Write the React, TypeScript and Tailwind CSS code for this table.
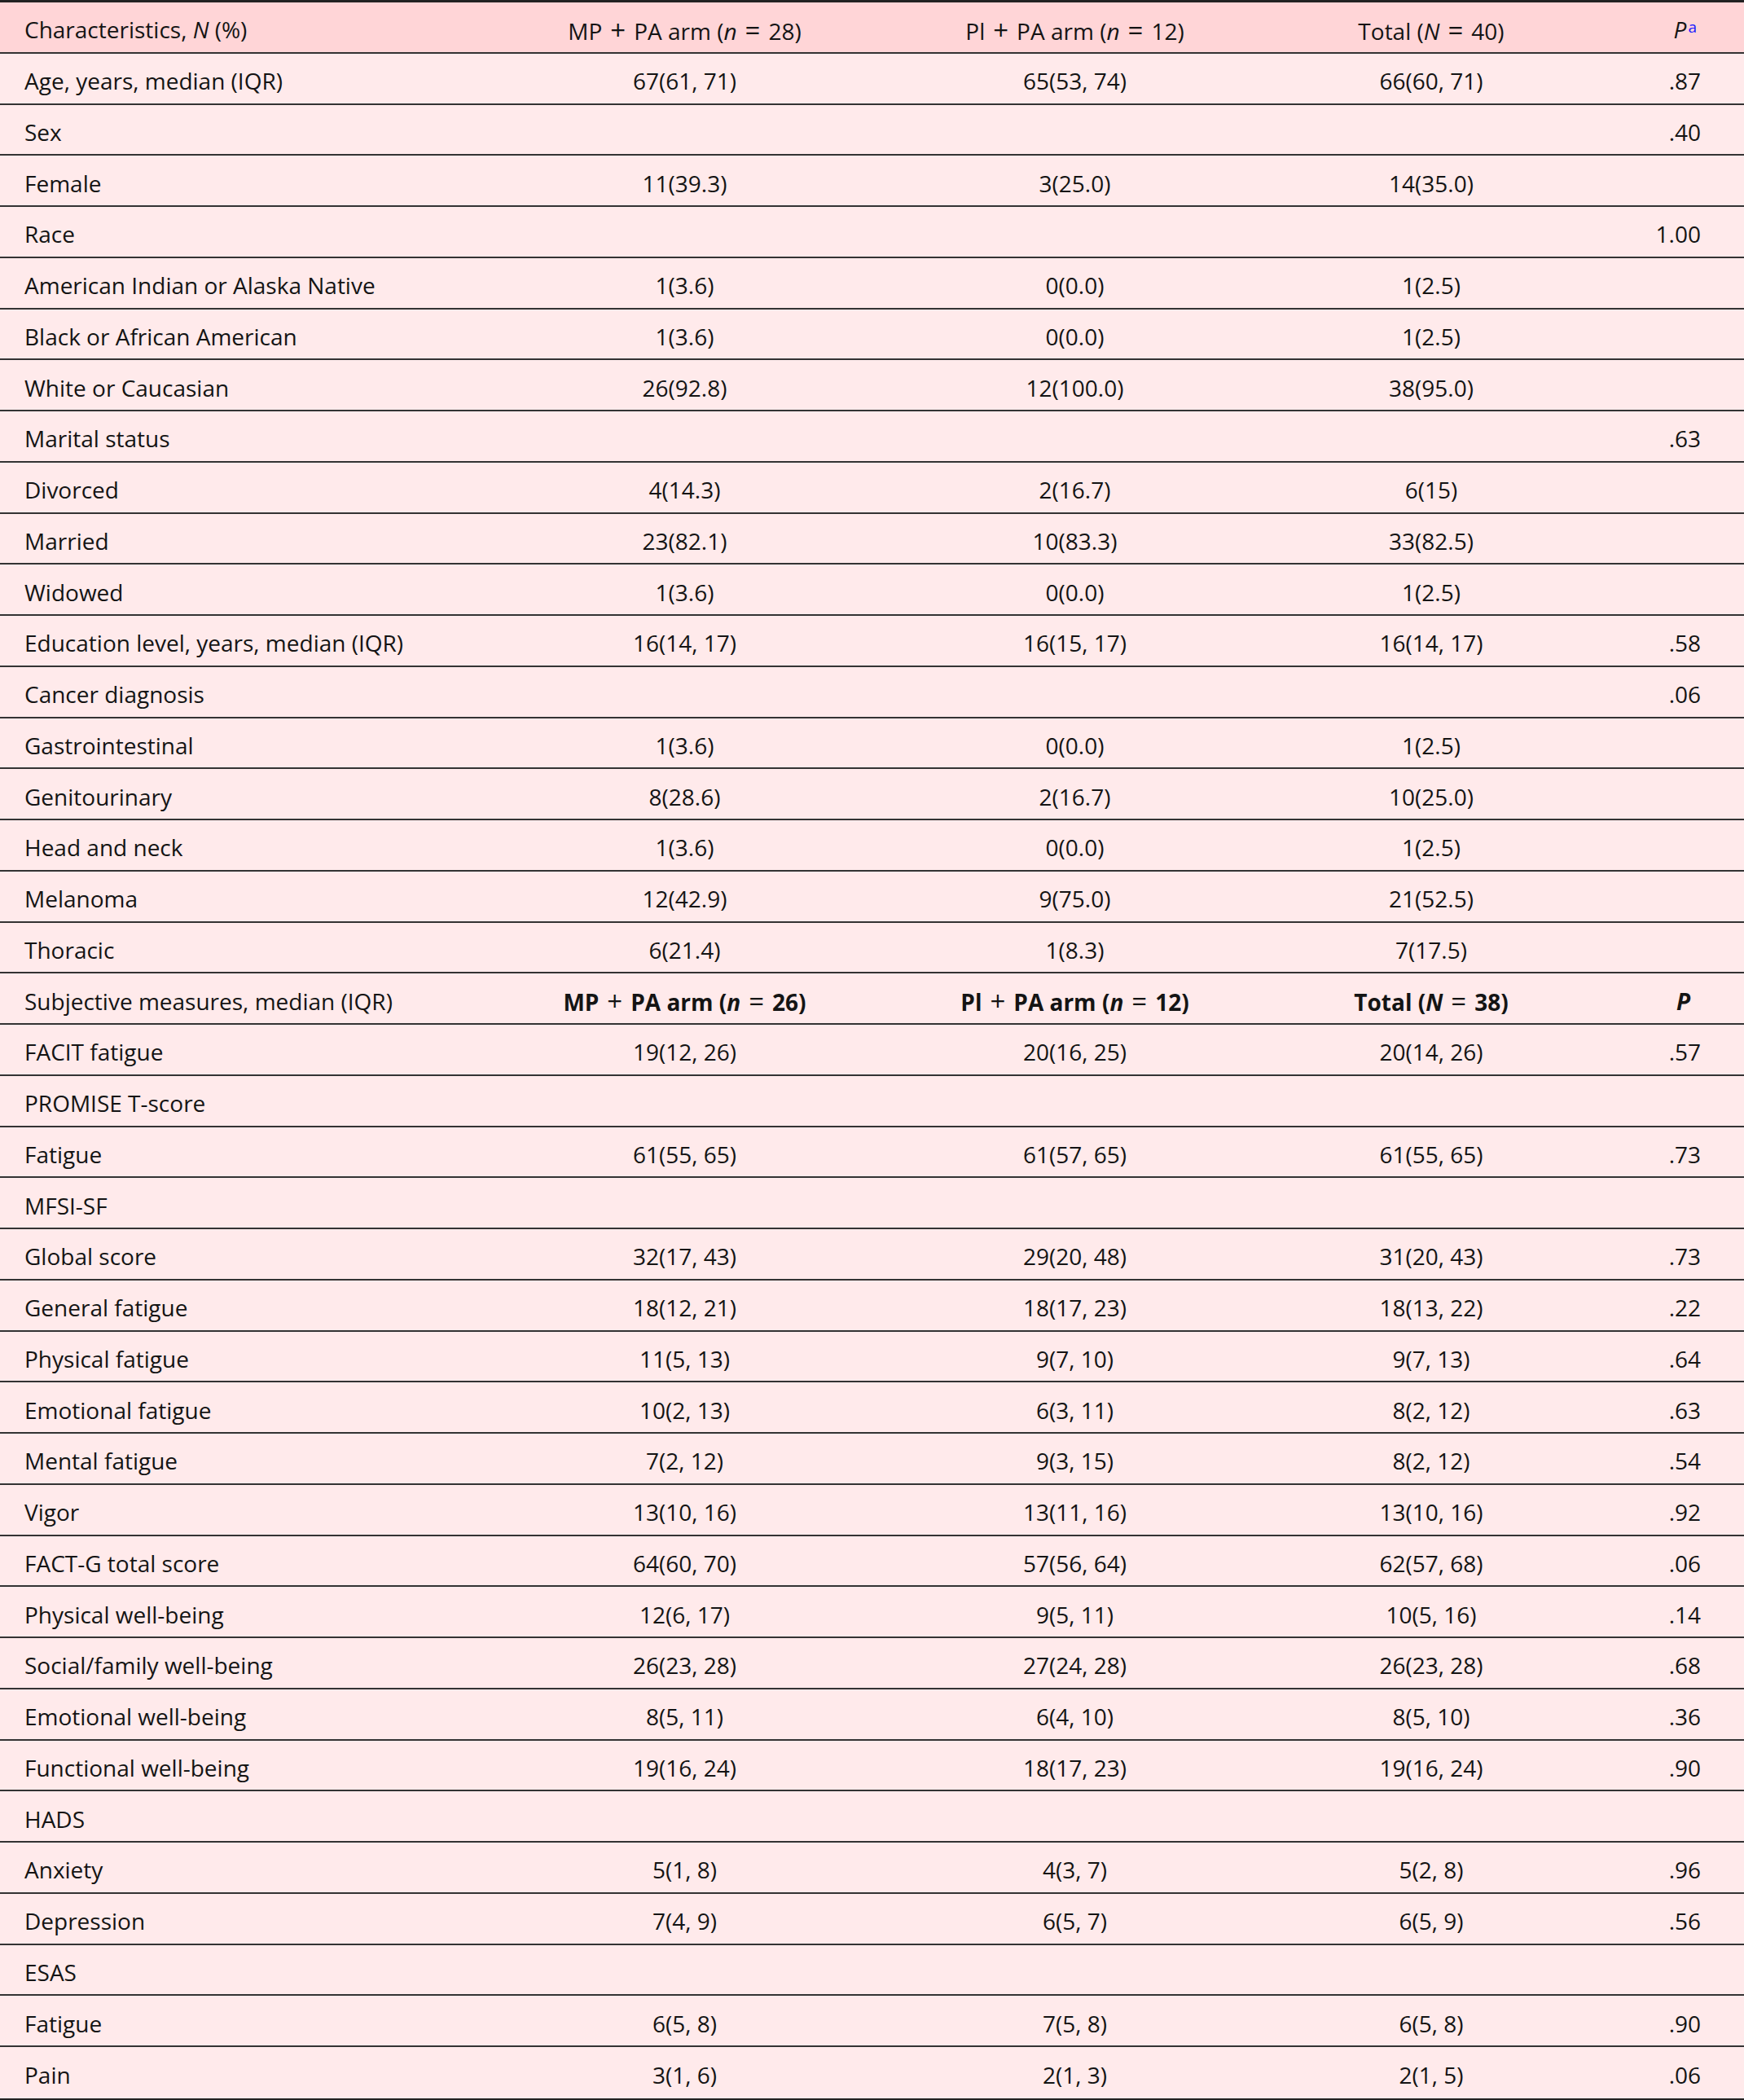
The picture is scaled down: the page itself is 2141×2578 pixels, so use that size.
import React from "react";

type Row = [string, string, string, string, string];

const top: Row[] = [
  ["Age, years, median (IQR)", "67(61, 71)", "65(53, 74)", "66(60, 71)", ".87"],
  ["Sex", "", "", "", ".40"],
  ["Female", "11(39.3)", "3(25.0)", "14(35.0)", ""],
  ["Race", "", "", "", "1.00"],
  ["American Indian or Alaska Native", "1(3.6)", "0(0.0)", "1(2.5)", ""],
  ["Black or African American", "1(3.6)", "0(0.0)", "1(2.5)", ""],
  ["White or Caucasian", "26(92.8)", "12(100.0)", "38(95.0)", ""],
  ["Marital status", "", "", "", ".63"],
  ["Divorced", "4(14.3)", "2(16.7)", "6(15)", ""],
  ["Married", "23(82.1)", "10(83.3)", "33(82.5)", ""],
  ["Widowed", "1(3.6)", "0(0.0)", "1(2.5)", ""],
  ["Education level, years, median (IQR)", "16(14, 17)", "16(15, 17)", "16(14, 17)", ".58"],
  ["Cancer diagnosis", "", "", "", ".06"],
  ["Gastrointestinal", "1(3.6)", "0(0.0)", "1(2.5)", ""],
  ["Genitourinary", "8(28.6)", "2(16.7)", "10(25.0)", ""],
  ["Head and neck", "1(3.6)", "0(0.0)", "1(2.5)", ""],
  ["Melanoma", "12(42.9)", "9(75.0)", "21(52.5)", ""],
  ["Thoracic", "6(21.4)", "1(8.3)", "7(17.5)", ""],
];

const bottom: Row[] = [
  ["FACIT fatigue", "19(12, 26)", "20(16, 25)", "20(14, 26)", ".57"],
  ["PROMISE T-score", "", "", "", ""],
  ["Fatigue", "61(55, 65)", "61(57, 65)", "61(55, 65)", ".73"],
  ["MFSI-SF", "", "", "", ""],
  ["Global score", "32(17, 43)", "29(20, 48)", "31(20, 43)", ".73"],
  ["General fatigue", "18(12, 21)", "18(17, 23)", "18(13, 22)", ".22"],
  ["Physical fatigue", "11(5, 13)", "9(7, 10)", "9(7, 13)", ".64"],
  ["Emotional fatigue", "10(2, 13)", "6(3, 11)", "8(2, 12)", ".63"],
  ["Mental fatigue", "7(2, 12)", "9(3, 15)", "8(2, 12)", ".54"],
  ["Vigor", "13(10, 16)", "13(11, 16)", "13(10, 16)", ".92"],
  ["FACT-G total score", "64(60, 70)", "57(56, 64)", "62(57, 68)", ".06"],
  ["Physical well-being", "12(6, 17)", "9(5, 11)", "10(5, 16)", ".14"],
  ["Social/family well-being", "26(23, 28)", "27(24, 28)", "26(23, 28)", ".68"],
  ["Emotional well-being", "8(5, 11)", "6(4, 10)", "8(5, 10)", ".36"],
  ["Functional well-being", "19(16, 24)", "18(17, 23)", "19(16, 24)", ".90"],
  ["HADS", "", "", "", ""],
  ["Anxiety", "5(1, 8)", "4(3, 7)", "5(2, 8)", ".96"],
  ["Depression", "7(4, 9)", "6(5, 7)", "6(5, 9)", ".56"],
  ["ESAS", "", "", "", ""],
  ["Fatigue", "6(5, 8)", "7(5, 8)", "6(5, 8)", ".90"],
  ["Pain", "3(1, 6)", "2(1, 3)", "2(1, 5)", ".06"],
];

function Op({ c }: { c: string }) {
  return <span className="mx-[10px] text-[33px] font-normal">{c}</span>;
}

function DataRow({ r, last }: { r: Row; last?: boolean }) {
  return (
    <div
      className={
        last
          ? "grid grid-cols-[601px_479px_479px_396px_1fr] h-[62.75px] items-center pt-[6px]"
          : "grid grid-cols-[601px_479px_479px_396px_1fr] h-[62.75px] items-center pt-[6px] border-b-2 border-[#333333]"
      }
    >
      <div className="pl-[30px] whitespace-nowrap">{r[0]}</div>
      <div className="text-center whitespace-nowrap">{r[1]}</div>
      <div className="text-center whitespace-nowrap">{r[2]}</div>
      <div className="text-center whitespace-nowrap">{r[3]}</div>
      <div className="text-right pr-[53px] whitespace-nowrap">{r[4]}</div>
    </div>
  );
}

export default function App() {
  return (
    <div
      className="w-[2141px] bg-[#ffeaeb] text-[#141414] text-[28px] leading-none border-t-[3px] border-b-[3px] border-[#222222]"
      style={{ fontFamily: '"Open Sans", "Noto Sans", sans-serif' }}
    >
      <div className="grid grid-cols-[601px_479px_479px_396px_1fr] h-[62.75px] items-center pt-[6px] border-b-2 border-[#333333] bg-[#ffd5d7]">
        <div className="pl-[30px] whitespace-nowrap">
          Characteristics, <i>N</i> (%)
        </div>
        <div className="text-center whitespace-nowrap">
          MP<Op c="+" />PA arm (<i>n</i><Op c="=" />28)
        </div>
        <div className="text-center whitespace-nowrap">
          Pl<Op c="+" />PA arm (<i>n</i><Op c="=" />12)
        </div>
        <div className="text-center whitespace-nowrap">
          Total (<i>N</i><Op c="=" />40)
        </div>
        <div className="text-right pr-[58px] whitespace-nowrap">
          <i>P</i>
          <sup className="text-[19px] text-[#1a1aff] not-italic ml-[2px] relative top-[-7px]">a</sup>
        </div>
      </div>
      {top.map((r, i) => (
        <DataRow key={"t" + i} r={r} />
      ))}
      <div className="grid grid-cols-[601px_479px_479px_396px_1fr] h-[62.75px] items-center pt-[6px] border-b-2 border-[#333333]">
        <div className="pl-[30px] whitespace-nowrap">Subjective measures, median (IQR)</div>
        <div className="text-center whitespace-nowrap font-bold">
          MP<Op c="+" />PA arm (<i>n</i><Op c="=" />26)
        </div>
        <div className="text-center whitespace-nowrap font-bold">
          Pl<Op c="+" />PA arm (<i>n</i><Op c="=" />12)
        </div>
        <div className="text-center whitespace-nowrap font-bold">
          Total (<i>N</i><Op c="=" />38)
        </div>
        <div className="text-right pr-[66px] whitespace-nowrap font-bold">
          <i>P</i>
        </div>
      </div>
      {bottom.map((r, i) => (
        <DataRow key={"b" + i} r={r} last={i === bottom.length - 1} />
      ))}
    </div>
  );
}
